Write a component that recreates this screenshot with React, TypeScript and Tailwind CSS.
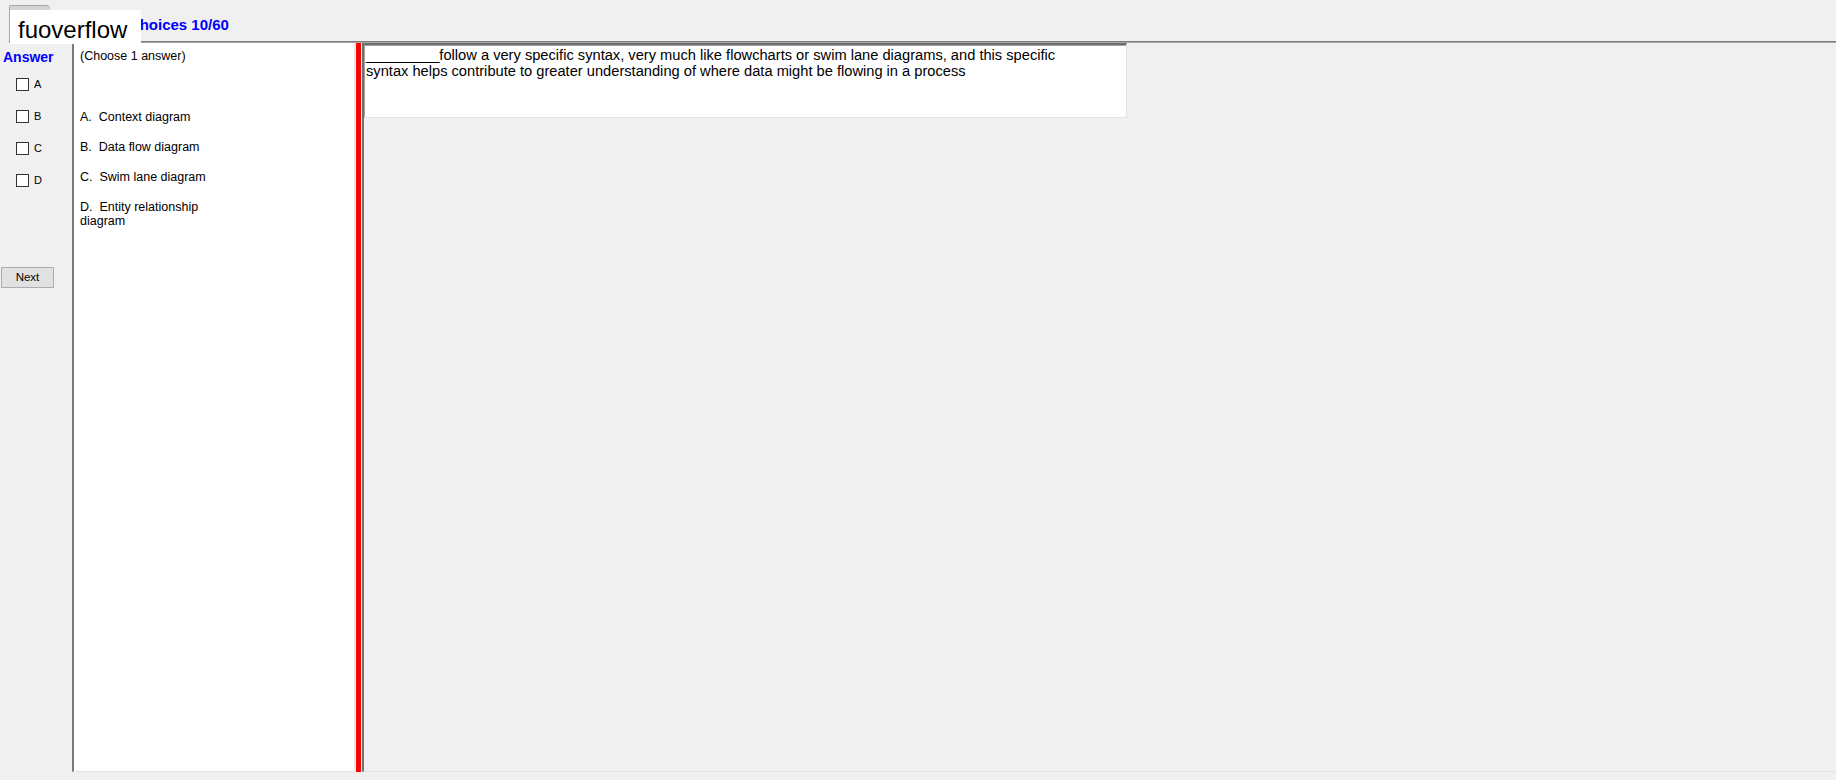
import React from "react";

const choices = [
  "A.  Context diagram",
  "B.  Data flow diagram",
  "C.  Swim lane diagram",
  "D.  Entity relationship diagram",
];

const letters = ["A", "B", "C", "D"];

export default function App() {
  return (
    <div className="relative flex h-[780px] w-[1836px] flex-col overflow-hidden bg-[#f0f0f0] font-['Liberation_Sans',Arial,sans-serif] text-black">
      {/* tab strip */}
      <div className="flex h-[41px] items-end">
        <div className="ml-[9px] h-[36px] w-[41px] rounded-tl-[2px] rounded-tr-[4px] border-l border-t border-[#a8a8a8] bg-[#d4d4d4]" />
        <span className="mb-[7px] ml-[18px] whitespace-nowrap text-[15px] font-bold leading-[18px] text-[#0000ff]">
          Multiple Choices 10/60
        </span>
      </div>

      {/* tab page top edge */}
      <div className="ml-[9px] flex flex-col">
        <div className="h-px bg-[#7c7c7c]" />
        <div className="h-px bg-[#a6a6a6]" />
      </div>

      {/* body */}
      <div className="flex h-[729px]">
        {/* answer column */}
        <div className="flex w-[72px] flex-col items-start">
          <div className="pl-[3px] pt-[6px] text-[14px] font-bold leading-[16px] text-[#0000ff]">
            Answer
          </div>
          <div className="mt-[13px] flex flex-col gap-[19px] pl-[16px]">
            {letters.map((l) => (
              <div key={l} className="flex h-[13px] items-center gap-[5px]">
                <span className="block h-[13px] w-[13px] border border-[#333333] bg-white" />
                <span className="text-[11px] leading-[13px]">{l}</span>
              </div>
            ))}
          </div>
          <button className="ml-[1px] mt-[80px] h-[21px] w-[53px] border border-[#adadad] bg-[#e1e1e1] text-[11.5px] leading-none text-black">
            Next
          </button>
        </div>

        {/* choice list */}
        <div className="w-[283px] border-b border-l-2 border-r border-b-[#e3e3e3] border-l-[#7a7a7a] border-r-[#e3e3e3] bg-white pl-[6px] pt-[6px] text-[12.5px] leading-[14px]">
          <div>(Choose 1 answer)</div>
          <div className="mt-[47px] flex w-[132px] flex-col gap-[16px]">
            {choices.map((c) => (
              <div key={c} className="whitespace-pre-wrap">
                {c}
              </div>
            ))}
          </div>
        </div>

        {/* splitter */}
        <div className="ml-[1px] w-[5px] bg-[#ff0000]" />

        {/* question pane */}
        <div className="ml-[1px] flex-1 border-b border-l-2 border-b-[#e3e3e3] border-l-[#6f6f6f]">
          <div className="h-[75px] w-[763px] whitespace-nowrap border-b border-r border-t-2 border-b-[#e3e3e3] border-r-[#e3e3e3] border-t-[#6f6f6f] bg-white pl-[2px] pt-[2px] text-[14.67px] leading-[16px] shadow-[inset_1px_1px_0_#a0a0a0]">
            _________follow a very specific syntax, very much like flowcharts or swim lane diagrams, and this specific
            <br />
            syntax helps contribute to greater understanding of where data might be flowing in a process
          </div>
        </div>
      </div>

      {/* site label */}
      <div className="absolute left-[10px] top-[10px] h-[34px] w-[131px] bg-white pl-[8px] pt-[8px] text-[24px] leading-none text-black">
        fuoverflow
      </div>
    </div>
  );
}
